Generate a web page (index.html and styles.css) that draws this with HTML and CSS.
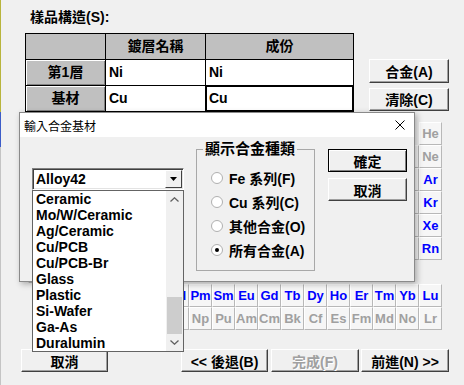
FILE: index.html
```html
<!DOCTYPE html>
<html lang="zh-Hant">
<head>
    <meta charset="UTF-8">
    <title>樣品構造</title>
    <link rel="stylesheet" href="styles.css">
</head>
<body>
<div class="page">
    <div class="caption">樣品構造(S):</div>

    <div class="top">
        <div class="layers">
            <div class="hd"></div><div class="hd">鍍層名稱</div><div class="hd">成份</div>
            <div class="rh">第1層</div><div>Ni</div><div>Ni</div>
            <div class="rh">基材</div><div>Cu</div><div class="focus">Cu</div>
        </div>
        <div class="side">
            <button class="btn">合金(A)</button>
            <button class="btn">清除(C)</button>
        </div>
    </div>

    <!-- element grid, the cells under the dialog are left blank -->
    <div class="pt">
        <span></span><span class="off c18">He</span>
        <span></span><span></span><span class="c13"></span><span></span><span></span><span></span><span></span><span class="off">Ne</span>
        <span></span><span></span><span class="c13"></span><span></span><span></span><span></span><span></span><span>Ar</span>
        <span></span><span></span><span></span><span></span><span></span><span></span><span></span><span></span><span></span><span></span><span></span><span></span><span></span><span></span><span></span><span></span><span></span><span>Kr</span>
        <span></span><span></span><span></span><span></span><span></span><span></span><span></span><span></span><span></span><span></span><span></span><span></span><span></span><span></span><span></span><span></span><span></span><span>Xe</span>
        <span></span><span></span><span class="c4"></span><span></span><span></span><span></span><span></span><span></span><span></span><span></span><span></span><span></span><span></span><span></span><span></span><span></span><span>Rn</span>
        <span></span><span></span>
    </div>
    <div class="pt fblock">
        <span class="c4"></span><span></span><span></span><span>Nd</span><span>Pm</span><span>Sm</span><span>Eu</span><span>Gd</span><span>Tb</span><span>Dy</span><span>Ho</span><span>Er</span><span>Tm</span><span>Yb</span><span>Lu</span>
        <span class="off c4"></span><span class="off"></span><span class="off"></span><span class="off"></span><span class="off">Np</span><span class="off">Pu</span><span class="off">Am</span><span class="off">Cm</span><span class="off">Bk</span><span class="off">Cf</span><span class="off">Es</span><span class="off">Fm</span><span class="off">Md</span><span class="off">No</span><span class="off">Lr</span>
    </div>

    <div class="nav">
        <button class="btn cancel">取消</button>
        <button class="btn back">&lt;&lt; 後退(B)</button>
        <button class="btn finish" disabled>完成(F)</button>
        <button class="btn next">前進(N) &gt;&gt;</button>
    </div>

    <!-- dialog on top of the page -->
    <div class="dialog">
        <div class="titlebar">
            <span>輸入合金基材</span>
            <svg class="close" width="10" height="10" viewBox="0 0 10 10"><path d="M0.5 0.5L9.5 9.5M9.5 0.5L0.5 9.5" stroke="#000" stroke-width="1"/></svg>
        </div>
        <div class="dlg-body">
            <div class="combo-wrap">
                <div class="combo">
                    <span class="combo-text">Alloy42</span>
                    <span class="drop"><svg width="7" height="4" viewBox="0 0 7 4"><path d="M0 0H7L3.5 4Z" fill="#000"/></svg></span>
                </div>
                <div class="list">
                    <ul class="items">
                        <li>Ceramic</li>
                        <li>Mo/W/Ceramic</li>
                        <li>Ag/Ceramic</li>
                        <li>Cu/PCB</li>
                        <li>Cu/PCB-Br</li>
                        <li>Glass</li>
                        <li>Plastic</li>
                        <li>Si-Wafer</li>
                        <li>Ga-As</li>
                        <li>Duralumin</li>
                    </ul>
                    <div class="scroll">
                        <span class="arrow"><svg width="9" height="5" viewBox="0 0 9 5"><path d="M0.5 4.5L4.5 0.8L8.5 4.5" fill="none" stroke="#606060" stroke-width="1.3"/></svg></span>
                        <div class="track"><div class="thumb"></div></div>
                        <span class="arrow"><svg width="9" height="5" viewBox="0 0 9 5"><path d="M0.5 0.5L4.5 4.2L8.5 0.5" fill="none" stroke="#606060" stroke-width="1.3"/></svg></span>
                    </div>
                </div>
            </div>
            <fieldset class="group">
                <legend>顯示合金種類</legend>
                <div class="radios">
                    <label class="radio"><span class="circle"></span>Fe 系列(F)</label>
                    <label class="radio"><span class="circle"></span>Cu 系列(C)</label>
                    <label class="radio"><span class="circle"></span>其他合金(O)</label>
                    <label class="radio"><span class="circle on"></span>所有合金(A)</label>
                </div>
            </fieldset>
            <div class="dlg-btns">
                <button class="btn default">確定</button>
                <button class="btn">取消</button>
            </div>
        </div>
    </div>
</div>
</body>
</html>
```

FILE: styles.css
```css
* { box-sizing: border-box; }
body { margin: 0; color: #000; font-family: "Liberation Sans", "Noto Sans CJK TC", sans-serif; font-size: 14px; font-weight: bold;
       background: linear-gradient(#b8b43c 0 112px, #3c5cc8 112px 147px, #c4c4c4 147px) 0 0 / 1px 100% no-repeat, #f0f0f0; }
.page { position: relative; width: 464px; height: 385px; overflow: hidden; }
.caption { height: 33px; padding: 9px 0 0 30px; line-height: 17px; }

.top { display: flex; height: 78px; }
.layers { margin-left: 25px; display: grid; grid-template-columns: 79px 99px 147px; grid-template-rows: 25px 25px 25px; gap: 1px; padding: 1px; background: #000; align-self: flex-start; }
.layers div { background: #fff; line-height: 25px; padding-left: 3px; }
.layers .hd { background: #c0c0c0; text-align: center; padding: 0; }
.layers .rh { background: #c0c0c0; text-align: center; padding: 0; box-shadow: inset 1px 1px #fff, inset -1px -1px #808080; }
.layers .focus { box-shadow: inset 0 0 0 1px #000; }
.side { margin-left: 15px; padding-top: 26px; display: flex; flex-direction: column; gap: 5px; }
.side .btn { width: 80px; height: 24px; }

.btn { font: inherit; color: #000; background: #f0f0f0; padding: 0; width: 79px; height: 23px;
       border: 1px solid; border-color: #fff #404040 #404040 #fff; box-shadow: inset -1px -1px #a0a0a0; }
.btn:disabled { color: #a0a0a0; text-shadow: 1px 1px #fff; }
.btn.default { border-color: #000; box-shadow: inset 1px 1px #fff, inset -1px -1px #808080; }

.pt { margin: 11px 0 0 28px; display: grid; grid-template-columns: repeat(18, 23px); grid-auto-rows: 23px; }
.pt.fblock { margin-top: 1px; }
.pt span { color: #0000ff; font-size: 13px; line-height: 21px; text-align: center; background: #f6f6f6;
           border: 1px solid; border-color: #fff #b8b8b8 #b8b8b8 #fff; }
.pt span.off { color: #a0a0a0; }
.c4 { grid-column-start: 4; }
.c13 { grid-column-start: 13; }
.c18 { grid-column-start: 18; }

.nav { display: flex; margin-top: 19px; }
.nav .btn { height: 23px; }
.nav .cancel { margin-left: 21px; width: 87px; }
.nav .back { margin-left: 73px; width: 87px; }
.nav .finish { margin-left: 3px; width: 88px; }
.nav .next { margin-left: 2px; width: 88px; }

.dialog { position: absolute; left: 19px; top: 112px; width: 396px; height: 170px; background: #f0f0f0;
          border: 1px solid #8a8a8a; box-shadow: 2px 2px 6px rgba(0, 0, 0, 0.3); }
.titlebar { height: 24px; background: #fff; display: flex; align-items: center; justify-content: space-between;
            padding: 0 9px 0 4px; font-weight: normal; font-size: 12px; font-family: "Noto Sans CJK TC", sans-serif; }
.dlg-body { display: flex; align-items: flex-start; }

.combo-wrap { position: relative; margin: 31px 0 0 12px; width: 152px; }
.combo { height: 22px; background: #fff; display: flex; align-items: center; justify-content: space-between;
         border: 1px solid; border-color: #808080 #fff #fff #808080; box-shadow: inset 1px 1px #404040, inset -1px -1px #e3e3e3; padding: 1px 1px 1px 3px; }
.drop { width: 17px; height: 18px; display: flex; align-items: center; justify-content: center; background: #f0f0f0;
        border: 1px solid; border-color: #fff #404040 #404040 #fff; }
.list { position: absolute; top: 22px; left: 0; width: 152px; height: 162px; background: #fff; border: 1px solid #646464; display: flex; }
.items { list-style: none; margin: 0; padding: 0; flex: 1; }
.items li { height: 16px; line-height: 16px; padding-left: 3px; }
.scroll { width: 17px; display: flex; flex-direction: column; background: #f0f0f0; }
.arrow { height: 17px; display: flex; align-items: center; justify-content: center; }
.track { flex: 1; display: flex; flex-direction: column; justify-content: flex-end; }
.thumb { height: 37px; background: #cdcdcd; margin: 0 1px; }

.group { margin: 2px 0 0 12px; padding: 0; width: 119px; height: 132px; border: 1px solid #a8a8a8; }
.group legend { margin-left: 6px; padding: 0 2px; font-size: 15px; line-height: 20px; }
.radios { padding: 7px 0 0 14px; }
.radio { display: flex; align-items: center; height: 24px; }
.circle { width: 12px; height: 12px; margin-right: 6px; border-radius: 50%; background: #fff; border: 1px solid #b0b0b0;
          display: flex; align-items: center; justify-content: center; }
.circle.on::after { content: ""; width: 4px; height: 4px; border-radius: 50%; background: #000; }

.dlg-btns { margin: 12px 0 0 13px; display: flex; flex-direction: column; gap: 6px; }
```
